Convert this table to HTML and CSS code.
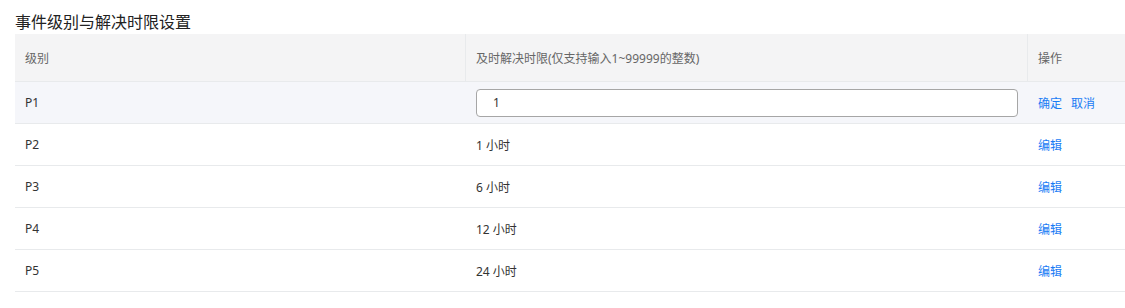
FILE: index.html
```html
<!DOCTYPE html>
<html lang="zh-CN">
<head>
<meta charset="utf-8">
<link rel="stylesheet" href="styles.css">
</head>
<body>
<div class="page">
  <div class="title">事件级别与解决时限设置</div>
  <div class="table">
    <div class="row head">
      <div class="cell">级别</div>
      <div class="cell">及时解决时限(仅支持输入1~99999的整数)</div>
      <div class="cell">操作</div>
    </div>
    <div class="row editing">
      <div class="cell">P1</div>
      <div class="cell"><input class="inp" type="text" value="1"></div>
      <div class="cell actions"><a class="link">确定</a><a class="link">取消</a></div>
    </div>
    <div class="row">
      <div class="cell">P2</div>
      <div class="cell">1 小时</div>
      <div class="cell"><a class="link">编辑</a></div>
    </div>
    <div class="row">
      <div class="cell">P3</div>
      <div class="cell">6 小时</div>
      <div class="cell"><a class="link">编辑</a></div>
    </div>
    <div class="row">
      <div class="cell">P4</div>
      <div class="cell">12 小时</div>
      <div class="cell"><a class="link">编辑</a></div>
    </div>
    <div class="row">
      <div class="cell">P5</div>
      <div class="cell">24 小时</div>
      <div class="cell"><a class="link">编辑</a></div>
    </div>
  </div>
</div>
</body>
</html>
```
FILE: styles.css
```css
html, body {
  margin: 0;
  padding: 0;
  background: #fff;
}
body {
  font-family: "Noto Sans", "Noto Sans CJK SC", sans-serif;
  color: #333;
}
.page {
  padding: 12px 0 0 15px;
}
.title {
  font-size: 16px;
  line-height: 21px;
  height: 22px;
  color: #222;
}
.table {
  font-size: 12px;
}
.row {
  display: grid;
  grid-template-columns: 451px 562px 1fr;
  height: 42px;
  border-bottom: 1px solid #e8eaec;
  box-sizing: border-box;
}
.cell {
  display: flex;
  align-items: center;
  padding-left: 10px;
  box-sizing: border-box;
}
.head {
  height: 48px;
  background: #f4f4f5;
  color: #666;
}
.head .cell:not(:last-child) {
  border-right: 1px solid #e8eaec;
}
.editing {
  background: #f5f6fa;
}
.inp {
  width: 542px;
  height: 28px;
  box-sizing: border-box;
  border: 1px solid #a6a6a6;
  border-radius: 4px;
  padding: 0 0 0 16px;
  font-family: "Noto Sans", "Noto Sans CJK SC", sans-serif;
  font-size: 12px;
  color: #333;
  background: #fff;
  outline: none;
}
.link {
  color: #1a7cf5;
  cursor: pointer;
}
.actions {
  gap: 9px;
}
```
